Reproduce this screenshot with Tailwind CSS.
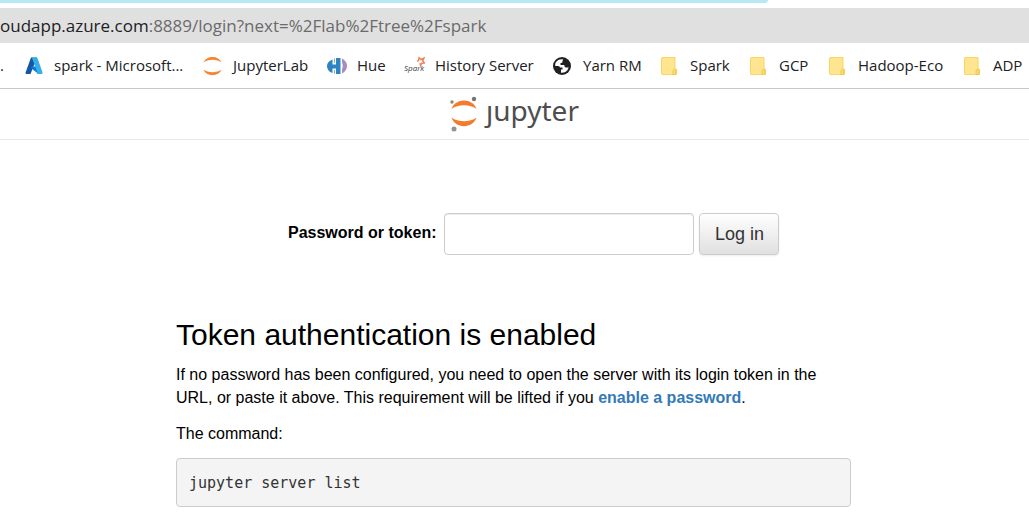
<!DOCTYPE html>
<html lang="en">
<head>
<meta charset="utf-8">
<title>Jupyter Server</title>
<script src="https://cdn.jsdelivr.net/npm/@tailwindcss/browser@4"></script>
</head>
<body class="bg-white text-black font-['Liberation_Sans',Arial,sans-serif] overflow-hidden">
<svg class="hidden">
  <symbol id="folder" viewBox="0 0 16 18">
    <path d="M1 .5h13v11.500h1.500v5.500H1a.8.8 0 0 1-.5-.8V1.200z" fill="#ffe58f" stroke="#f8d563"/>
    <path d="M12 17.500v-3.500q0-1.500 1.500-1.500t1.500 1.500v2q0 1.500-1.500 1.500z" fill="#f7dc75" stroke="#e9c449" stroke-width=".8"/>
  </symbol>
</svg>
<div class="h-2">
  <div class="h-[3px] w-[768px] rounded-br-lg bg-[#b6e9f2]"></div>
</div>
<div class="flex h-[35px] items-center overflow-hidden whitespace-nowrap bg-[#e0e0e0] text-[17px] text-[#6b6b6b] font-['Open_Sans','Noto_Sans',sans-serif]">
  <span><span class="text-[#202124]">oudapp.azure.com</span>:8889/login?next=%2Flab%2Ftree%2Fspark</span>
</div>
<nav class="flex h-[46px] items-center overflow-hidden whitespace-nowrap border-b border-[#c8c8c8] text-[15px] text-[#202124] font-['Open_Sans','Noto_Sans',sans-serif]">
  <span class="w-[25px] shrink-0">.</span>
  <a href="#" class="flex w-[178px] shrink-0 items-center gap-[11px]">
    <svg class="size-[18px]" viewBox="0 0 18 18"><path d="M6 .5h6L5.500 17H1.500Q.2 17 .6 15.500z" fill="#1258a4"/><path d="M6.500 9.500h7l3 7.500h-3L6 11z" fill="#0b78d0"/><path d="M6.300.5h5.200q.7 0 1 .8l5 14q.5 1.700-1.200 1.700h-4.500q.8-.5.4-1.700L7 .9z" fill="#35aee9"/></svg>
    <span>spark - Microsoft...</span></a>
  <a href="#" class="flex w-[124px] shrink-0 items-center gap-[11px]">
    <svg class="h-5 w-[19px]" viewBox="0 0 19 20"><path d="M.5 6.500C3-1 16-1 18.500 6.500 14 2.800 5 2.800.5 6.500zM.5 13.500C3 21 16 21 18.500 13.500 14 17.200 5 17.200.5 13.500z" fill="#f58634"/></svg>
    <span>JupyterLab</span></a>
  <a href="#" class="flex w-[77px] shrink-0 items-center gap-2.5">
    <svg class="h-[18px] w-5" viewBox="0 0 20 18"><path d="M5.500 2.500v5H9V1h4.500v16H9v-5.500H5.500v4.500Q0 14 0 9.200 0 4.500 5.500 2.500z" fill="#2e83c1"/><path d="M7.500 1.300v4.500M7.500 13v3.700" stroke="#7fb3da" stroke-width="1"/><path d="M15 1.500Q20 4 20 9t-5 7.500v-3.500q1.600-4 0-8z" fill="#a78bc2"/></svg>
    <span>Hue</span></a>
  <a href="#" class="flex w-[149px] shrink-0 items-center gap-2.5">
    <svg class="h-5 w-[21px]" viewBox="0 0 21 20"><path d="M13 5l1.500-.3.600-3 2 1.800L20 2l-1.200 3 1.500 2-2.600.2-1 2.300-.8-2.300" fill="none" stroke="#ef8357" stroke-width="1.500"/><text x="0" y="15" class="fill-[#3c3c3c] text-[8px] italic font-['Open_Sans',sans-serif]">Spark</text></svg>
    <span>History Server</span></a>
  <a href="#" class="flex w-[108px] shrink-0 items-center gap-3">
    <svg class="size-[18px]" viewBox="0 0 18 18"><circle cx="9" cy="9" r="9" fill="#202124"/><path d="M10 2.200Q5 1.700 2.700 5.500 1.800 7.500 2.300 9H5q2 0 2 1.500h2.500v2H8v3.300q6 .2 7.700-5.300H13q-1.700 0-1.700-2.500H7.500V6Q9.700 6.200 9.500 4.500z" fill="#fff"/></svg>
    <span>Yarn RM</span></a>
  <a href="#" class="flex w-[89px] shrink-0 items-center gap-[13px]"><svg class="h-[18px] w-4"><use href="#folder"/></svg><span>Spark</span></a>
  <a href="#" class="flex w-[79px] shrink-0 items-center gap-[13px]"><svg class="h-[18px] w-4"><use href="#folder"/></svg><span>GCP</span></a>
  <a href="#" class="flex w-[135px] shrink-0 items-center gap-[13px]"><svg class="h-[18px] w-4"><use href="#folder"/></svg><span>Hadoop-Eco</span></a>
  <a href="#" class="flex shrink-0 items-center gap-[13px]"><svg class="h-[18px] w-4"><use href="#folder"/></svg><span>ADP</span></a>
</nav>
<header class="flex h-[51px] items-center justify-center border-b border-[#e7e7e7] pb-2">
  <a href="#" class="flex items-center gap-2" aria-label="jupyter">
    <svg class="mt-2 h-9 w-7" viewBox="0 0 28 36"><path d="M1.500 13C5 1.500 23 1.500 26.500 13 20 8 8 8 1.500 13zM1.500 21.500C5 33 23 33 26.500 21.500 20 26.500 8 26.500 1.500 21.500z" fill="#f47b2c"/><circle cx="24" cy="3" r="2.200" fill="#757575"/><circle cx="2" cy="6" r="1.700" fill="#858585"/><circle cx="4" cy="33" r="2.500" fill="#929292"/></svg>
    <span class="pb-px text-[28px] leading-9 text-[#4e4e4e] font-['Noto_Sans','Open_Sans',sans-serif]">ȷupyter</span>
  </a>
</header>
<main class="pl-44 pr-[178px]">
  <form class="mt-[73px] flex items-center pl-28" onsubmit="return false">
    <label for="password" class="mr-2 pb-0.5 whitespace-nowrap text-base font-bold">Password or token:</label>
    <input id="password" type="password" class="mr-[5px] h-[42px] w-[250px] rounded border border-[#ccc] bg-white px-3 shadow-[inset_0_1px_1px_rgba(0,0,0,0.075)]">
    <button type="submit" class="h-[42px] w-20 rounded border border-[#ccc] bg-linear-to-b from-white to-[#e0e0e0] text-lg text-[#333] shadow-[0_1px_2px_rgba(0,0,0,0.08)]">Log in</button>
  </form>
  <h1 class="mt-[62px] text-[30px] leading-9">Token authentication is enabled</h1>
  <p class="mt-[10px] text-base leading-[23px]">If no password has been configured, you need to open the server with its login token in the URL, or paste it above. This requirement will be lifted if you <a href="#" class="font-bold text-[#337ab7]">enable a password</a>.</p>
  <p class="mt-[13px] text-base leading-[23px]">The command:</p>
  <pre class="mt-[13px] rounded border border-[#ccc] bg-[#f4f4f4] px-3 pt-[13px] pb-3 text-[15px] leading-[22px] text-[#333] font-['DejaVu_Sans_Mono',monospace]">jupyter server list</pre>
</main>
</body>
</html>
